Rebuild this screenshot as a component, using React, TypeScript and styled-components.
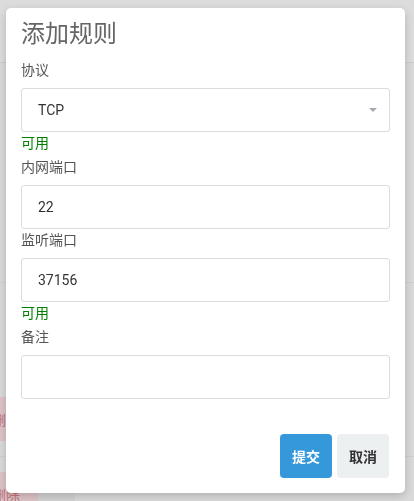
import React from "react";
import styled, { createGlobalStyle } from "styled-components";

const Global = createGlobalStyle`
  html, body { margin: 0; padding: 0; }
  body {
    background: #d9d9d9;
    font-family: Roboto, "Noto Sans CJK SC", sans-serif;
    width: 414px;
    height: 501px;
    overflow: hidden;
  }
`;

const Page = styled.div`
  width: 414px;
  height: 501px;
  display: flex;
  flex-direction: column;
  overflow: hidden;
`;

const TopBand = styled.div`
  height: 62px;
  background: #dcdcdc;
  border-bottom: 1px solid #cdcdcd;
  flex: none;
`;

const Spacer = styled.div<{ $h: number }>`
  height: ${(p) => p.$h}px;
  flex: none;
  border-bottom: 1px solid #cfcfcf;
`;

const Row = styled.div<{ $h: number; $pad: number; $line?: boolean }>`
  height: ${(p) => p.$h}px;
  padding-top: ${(p) => p.$pad}px;
  flex: none;
  display: flex;
  align-items: flex-start;
  box-sizing: border-box;
  border-bottom: ${(p) => (p.$line ? "1px solid #cfcfcf" : "none")};
`;

const DangerCell = styled.div`
  width: 38px;
  height: 44px;
  background: #dcc3c6;
  color: #c2727b;
  font-size: 14px;
  display: flex;
  align-items: center;
  justify-content: flex-end;
  padding-right: 18px;
  box-sizing: border-box;
  white-space: nowrap;
  flex: none;
`;

const GreyCell = styled.div`
  width: 37px;
  height: 44px;
  background: #d2d2d2;
  flex: none;
`;

const Modal = styled.div`
  position: fixed;
  left: 6px;
  top: 8px;
  width: 399px;
  height: 485px;
  box-sizing: border-box;
  background: #fff;
  border-radius: 5px;
  box-shadow: 0 3px 9px rgba(0, 0, 0, 0.18);
  padding: 12px 15px 15px;
  display: flex;
  flex-direction: column;
`;

const Title = styled.h3`
  margin: 0;
  font-size: 24px;
  font-weight: 400;
  line-height: 28px;
  color: #666;
  height: 28px;
`;

const Label = styled.label<{ $top?: number }>`
  display: block;
  font-size: 14px;
  line-height: 20px;
  color: #555;
  margin: ${(p) => (p.$top ?? 1)}px 0 8px;
`;

const Help = styled.div`
  font-size: 14px;
  line-height: 20px;
  color: #008000;
  margin: 1px 0 3px;
`;

const Field = styled.div`
  height: 44px;
  box-sizing: border-box;
  border: 1px solid #dcdcdc;
  border-radius: 3px;
  padding: 0 16px;
  display: flex;
  align-items: center;
  justify-content: space-between;
  font-size: 14px;
  color: #333;
`;

const Caret = styled.span`
  width: 0;
  height: 0;
  border-left: 4px solid transparent;
  border-right: 4px solid transparent;
  border-top: 4px solid #a9a9b3;
  margin-right: -4px;
`;

const Footer = styled.div`
  margin-top: auto;
  display: flex;
  justify-content: flex-end;
  gap: 5px;
  padding-right: 1px;
`;

const Button = styled.button<{ $primary?: boolean }>`
  width: 52px;
  height: 44px;
  border: none;
  border-radius: 4px;
  font-family: Roboto, "Noto Sans CJK SC", sans-serif;
  font-size: 14px;
  font-weight: 700;
  background: ${(p) => (p.$primary ? "#3498db" : "#ecf0f1")};
  color: ${(p) => (p.$primary ? "#fff" : "#333")};
  padding: 0;
`;

export default function App() {
  return (
    <>
      <Global />
      <Page>
        <TopBand />
        <Spacer $h={219} />
        <Row $h={174} $pad={114} $line>
          <DangerCell>删除</DangerCell>
        </Row>
        <Row $h={61} $pad={15}>
          <DangerCell>删除</DangerCell>
          <GreyCell />
        </Row>
      </Page>
      <Modal>
        <Title>添加规则</Title>
        <Label $top={12}>协议</Label>
        <Field>
          <span>TCP</span>
          <Caret />
        </Field>
        <Help>可用</Help>
        <Label>内网端口</Label>
        <Field>22</Field>
        <Label>监听端口</Label>
        <Field>37156</Field>
        <Help>可用</Help>
        <Label>备注</Label>
        <Field />
        <Footer>
          <Button $primary>提交</Button>
          <Button>取消</Button>
        </Footer>
      </Modal>
    </>
  );
}
